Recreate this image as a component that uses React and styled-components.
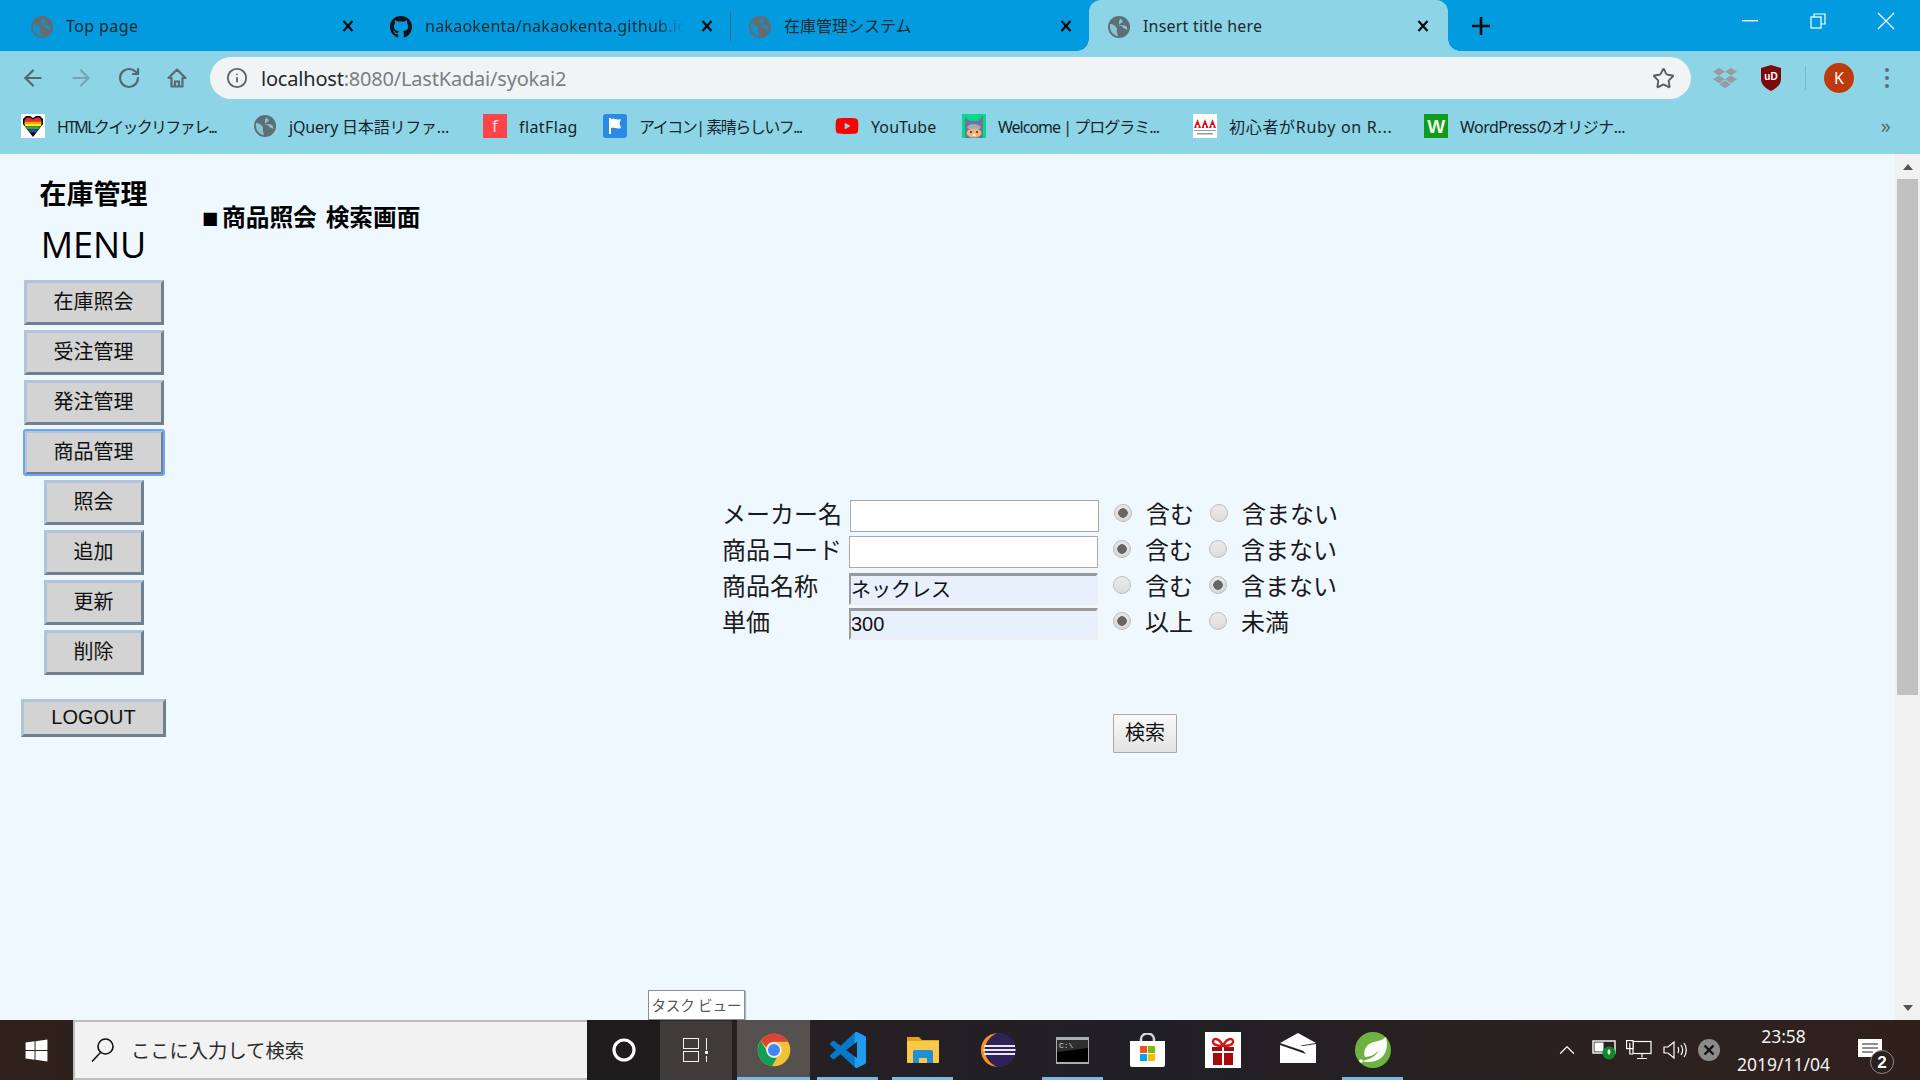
import React from "react";
import styled, { createGlobalStyle } from "styled-components";
import { ArrowLeft, ArrowRight, RotateCw, Info, Star, ChevronUp } from "lucide-react";
import { FaGithub, FaYoutube, FaWindows, FaDropbox } from "react-icons/fa";

const UI = `"Noto Sans", "Noto Sans CJK JP", sans-serif`;
const JP = `"Noto Sans CJK JP", "Noto Sans", sans-serif`;
const SAFE = `"Liberation Sans", "Noto Sans CJK JP", sans-serif`;

const Global = createGlobalStyle`
  html, body { margin: 0; padding: 0; overflow: hidden; background: #f0f8ff; }
  * { box-sizing: border-box; }
`;

const Screen = styled.div`
  width: 1920px; height: 1080px; display: flex; flex-direction: column; font-family: ${UI}; color: #111;
`;
const TabStrip = styled.div`
  height: 51px; display: flex; background: #039bdf; padding-left: 12px; flex: none;
`;
const Tab = styled.div`
  position: relative; width: 359px; height: 51px; display: flex; align-items: center; gap: 13px;
  padding: 3px ${p => (p.$active ? 15 : 13)}px 0 19px; font-size: 16px; color: #1d2a30;
  border-radius: ${p => (p.$active ? "12px 12px 0 0" : "0")};
  background: ${p => (p.$active ? "#8dd5e6" : "transparent")};
  ${p => p.$sep && `&::after { content: ""; position: absolute; right: -1px; top: 11px; height: 30px; width: 1px; background: #2a6f93; }`}
  ${p => p.$active && `
    &::before, &::after { content: ""; position: absolute; bottom: 0; width: 12px; height: 12px; }
    &::before { left: -12px; background: radial-gradient(circle at 0 0, #039bdf 11.5px, #8dd5e6 12px); }
    &::after { right: -12px; background: radial-gradient(circle at 100% 0, #039bdf 11.5px, #8dd5e6 12px); }
  `}
`;
const TabIcon = styled.span`
  width: 22px; height: 22px; flex: none; display: flex; align-items: center; justify-content: center;
  margin-top: -1px;
`;
const TabTitle = styled.span`
  flex: 1; min-width: 0; white-space: nowrap; overflow: hidden; line-height: 24px; font-family: ${UI};
  margin-top: -2px; letter-spacing: ${p => p.$ls || 0}px;
  ${p => p.$fade && `-webkit-mask-image: linear-gradient(90deg, #000 90%, transparent 100%);`}
`;
const TabClose = styled.span`
  width: 20px; height: 20px; flex: none; display: flex; align-items: center; justify-content: center;
  margin-top: -3px;
`;
const NewTab = styled.div`
  width: 66px; height: 51px; display: flex; align-items: center; justify-content: center;
`;
const WindowControls = styled.div`
  margin-left: auto; display: flex; height: 42px;
`;
const WindowButton = styled.div`
  width: 68px; height: 42px; display: flex; align-items: center; justify-content: center;
`;
const Toolbar = styled.div`
  height: 54px; flex: none; display: flex; align-items: center; padding-left: 9px; background: #8dd5e6;
`;
const NavButton = styled.div`
  width: 48px; height: 42px; display: flex; align-items: center; justify-content: center;
`;
const Omnibox = styled.div`
  width: 1481px; height: 42px; margin-left: 9px; border-radius: 21px; background: #f1f3f4;
  display: flex; align-items: center; padding: 0 16px 0 16px; gap: 13px; font-size: 20px;
`;
const Url = styled.div`
  flex: 1; color: #7b7f83; line-height: 28px; letter-spacing: -0.2px; padding-top: 1px;
  b { font-weight: 400; color: #26292b; }
`;
const ExtCell = styled.div`
  width: 46px; height: 42px; display: flex; align-items: center; justify-content: center;
  margin-left: ${p => p.$ml || 0}px;
`;
const ToolSep = styled.div`
  width: 1px; height: 24px; margin-left: 11px; background: #79bccc;
`;
const Avatar = styled.div`
  width: 30px; height: 30px; border-radius: 50%; background: #bf3a0b; color: #fff; font-size: 16px;
  display: flex; align-items: center; justify-content: center;
`;
const Kebab = styled.div`
  width: 4px; height: 20px; display: flex; flex-direction: column; justify-content: space-between;
  i { display: block; width: 4px; height: 4px; border-radius: 50%; background: #5f6a6e; }
`;
const BookmarkBar = styled.div`
  height: 49px; flex: none; display: flex; align-items: flex-start; padding: 9px 0 0 21px; background: #8dd5e6;
`;
const Bookmark = styled.div`
  display: flex; gap: 12px; font-size: 16px; line-height: 26px; color: #17242a; white-space: nowrap; flex: none;
  width: ${p => p.$w}px; letter-spacing: ${p => p.$ls || 0}px;
`;
const Favicon = styled.span`
  width: 24px; height: 24px; flex: none; display: flex; align-items: center; justify-content: center;
`;
const MoreBookmarks = styled.div`
  margin-left: auto; margin-right: 29px; font-size: 20px; line-height: 24px; color: #5f6a6e;
`;
const Viewport = styled.div`
  height: 866px; flex: none; display: flex; background: #f0f8ff;
`;
const Sidebar = styled.aside`
  width: 187px; flex: none; display: flex; flex-direction: column; align-items: center; padding-top: 20px;
`;
const BrandTitle = styled.div`
  font-family: ${JP}; font-weight: 700; font-size: 27px; line-height: 38px; color: #000;
`;
const MenuTitle = styled.div`
  font-size: 36px; line-height: 50px; margin: 8px 0 10px; color: #000; font-family: "Open Sans", sans-serif;
`;
const MenuList = styled.div`
  display: flex; flex-direction: column; align-items: center; gap: 5px;
`;
const MenuButton = styled.button`
  width: ${p => (p.$sub ? 100 : 140)}px; height: 45px; padding: 0 0 5px; background: #d3d3d3;
  border-width: 3px; border-style: solid; border-color: #b0c4de #708090 #708090 #b0c4de;
  font: 20px ${JP}; color: #111; border-radius: 0;
  ${p => p.$focus && `outline: 2px solid #6ea5f8; outline-offset: -1px; border-radius: 2px;`}
`;
const LogoutButton = styled(MenuButton)`
  width: 145px; height: 38px; margin-top: 19px; font: 20px ${SAFE}; padding: 0 0 2px;
`;
const Main = styled.main`
  flex: 1; padding: 46px 0 0 15px;
`;
const Heading = styled.div`
  height: 32px; overflow: visible; font-family: ${JP}; font-weight: 700; font-size: 23.7px; line-height: 32px; color: #000;
  white-space: pre; word-spacing: 3.5px;
`;
const HeadingMark = styled.span`
  display: inline-block; width: 20px; font-size: 16.5px; line-height: 20px;
`;
const Form = styled.form`
  margin: 268px 0 0 521px;
`;
const FormRow = styled.div`
  display: flex; height: 36px; align-items: flex-start;
`;
const FieldLabel = styled.label`
  width: 127px; margin-left: -1px; flex: none; font: 24px/26px ${JP}; color: #1a1a1a; white-space: nowrap;
`;
const Fields = styled.div`
  display: flex; align-items: flex-start; margin-left: ${p => p.$shift || 0}px;
`;
const TextField = styled.input`
  width: 249px; height: 32px; margin: ${p => p.$drop || 0}px 0 0; padding: 0 ${p => (p.$filled ? 0 : 1)}px ${p => (p.$drop ? 3 : 0)}px; outline: none;
  font: 20px ${SAFE}; color: #111;
  ${p => p.$filled
    ? `background: #e8f0fe; border-width: 3px 2px 2px; border-style: solid; border-color: #9a9a9a #efefef #efefef #9a9a9a;`
    : `background: #fff; border: 1px solid #a9a9a9;`}
`;
const Radio = styled.input`
  appearance: none; -webkit-appearance: none; width: 18px; height: 18px; margin: 4px 0 0 15px; flex: none;
  border-radius: 50%; border: 1px solid #bcbcbc;
  background: ${p => p.checked
    ? "radial-gradient(circle, #666 0 4.5px, transparent 5px), linear-gradient(#e8e8e8, #d8d8d8)"
    : "linear-gradient(#ebebeb, #dcdcdc)"};
`;
const RadioText = styled.span`
  margin-left: 14px; font: 24px/26px ${JP}; color: #1a1a1a; white-space: nowrap; width: ${p => p.$w}px;
`;
const SearchButton = styled.button`
  display: block; width: 64px; height: 39px; margin: 70px 0 0 390px; padding: 0 0 4px;
  background: linear-gradient(#fafafa, #e2e2e2); border: 1px solid #a8a8a8; border-radius: 1px;
  font: 20px ${JP}; color: #111;
`;
const Scrollbar = styled.div`
  width: 25px; flex: none; background: #f1f1f1; display: flex; flex-direction: column; align-items: center;
`;
const ScrollArrow = styled.div`
  height: 25px; flex: none; display: flex; align-items: center; justify-content: center;
`;
const ScrollThumb = styled.div`
  width: 21px; height: 516px; background: #c1c1c1; flex: none;
`;
const ScrollTrack = styled.div`
  flex: 1;
`;
const Taskbar = styled.div`
  height: 60px; flex: none; display: flex; align-items: stretch; color: #fff;
  background: linear-gradient(90deg, #2f211b 0%, #262021 35%, #211f26 60%, #2c221f 85%, #30201c 100%);
`;
const StartCell = styled.div`
  width: 73px; display: flex; align-items: center; justify-content: center;
`;
const SearchBox = styled.div`
  width: 514px; background: #f2f2f2; border: 2px solid #bdbdbd; border-right: none; display: flex; align-items: center;
  padding-left: 16px; gap: 17px; color: #2b2b2b; font: 19.3px ${JP};
`;
const CortanaCell = styled.div`
  width: 73px; background: #1f1c1e; display: flex; align-items: center; justify-content: center;
`;
const TaskViewCell = styled.div`
  position: relative; width: 72px; background: #3f3b3b; display: flex; align-items: center; justify-content: center;
`;
const Tooltip = styled.div`
  position: absolute; left: -12px; top: -30px; width: 97px; height: 30px; background: #fff; border: 1px solid #8e8e8e;
  color: #555; font: 14.5px/28px ${JP}; text-align: center; white-space: nowrap; box-shadow: 1px 1px 1px #0004;
`;
const AppSlots = styled.div`
  display: flex; margin-left: 3px;
`;
const AppSlot = styled.div`
  position: relative; width: 75px; display: flex; align-items: center; justify-content: center;
  background: ${p => (p.$hot ? "#55514f" : "transparent")};
  ${p => p.$hot && `margin-left: 2px; width: 73px;`}
  ${p => p.$running && `&::after { content: ""; position: absolute; bottom: 0; left: ${p.$hot ? 0 : 7}px; right: ${p.$hot ? 0 : 7}px; height: 3px; background: #76b9ed; }`}
`;
const Tray = styled.div`
  margin-left: auto; display: flex; padding-right: 6px;
`;
const TrayCell = styled.div`
  width: ${p => p.$w || 36}px; display: flex; align-items: center; justify-content: center;
  padding-left: ${p => p.$pl || 0}px;
`;
const Clock = styled.div`
  width: 117px; display: flex; flex-direction: column; align-items: center; justify-content: center;
  font: 17.5px/28px ${UI}; color: #f2f2f2;
`;

const Globe = ({ s = 22, c = "#5f6e74", b = "#8dd5e6" }) => (
  <svg width={s} height={s} viewBox="0 0 22 22">
    <circle cx="11" cy="11" r="11" fill={c} />
    <path d="M2 8c3 0 5 1.500 6.500 3.500 1 1.600 0 3 .5 5 .3 1.500 1 2.500 1 3.500-4-.4-7.500-4-8-8-.2-1.500 0-3 0-4z" fill={b} opacity=".85" />
    <path d="M12 2.500c1.500 1 3 1.500 2.500 3.500-.5 1.500-3 1-3.500 3 1.500.5 5-.5 7 1 1 .8 1.500 3 1 4.500-.3-1.500-2-2-3.500-2 0-2-2-2.500-4-2.500-1-2.500-.5-5 .5-7.500z" fill={b} opacity=".85" />
  </svg>
);
const CloseX = () => (
  <svg width="14" height="14" viewBox="0 0 14 14"><path d="M2.500 2l9 10M11.500 2l-9 10" stroke="#0a0a0a" strokeWidth="2.200" /></svg>
);
const HomeIcon = () => (
  <svg width="24" height="24" viewBox="0 0 24 24" fill="none" stroke="#5b6a70" strokeWidth="2.200"><path d="M12 3.500L3.500 12H6.500v8.500h11V12h3z" strokeLinejoin="round" /><path d="M10 20.500v-5h4v5" /></svg>
);
const UBlock = () => (
  <svg width="22" height="26" viewBox="0 0 22 26">
    <path d="M11 0l10 3v11c0 6-5 9.500-10 12C6 23.500 1 20 1 14V3z" fill="#7b0a0d" />
    <text x="11" y="15" textAnchor="middle" fontSize="10" fontWeight="700" fill="#fff" fontFamily="Liberation Sans">uD</text>
  </svg>
);
const Heart = () => (
  <svg width="24" height="24" viewBox="0 0 24 24">
    <rect width="24" height="24" fill="#fff" />
    <path d="M12 23L2 10V5l3-3h4l3 2 3-2h4l3 3v5z" fill="#000" />
    <path d="M3.500 6L6 3.500h3L12 5.500l3-2h3L20.500 6v1.500h-17z" fill="#ef2a2a" />
    <path d="M3.500 7.500h17V10h-17z" fill="#f7a51d" />
    <path d="M3.500 10h17l-.8 2.500H4.300z" fill="#f3ea20" />
    <path d="M4.600 12.500h14.800l-2 3H6.600z" fill="#2fa936" />
    <path d="M6.900 15.500h10.200l-2.300 3H9.200z" fill="#2446c4" />
  </svg>
);
const FlatFlag = () => (
  <svg width="24" height="24" viewBox="0 0 24 24">
    <rect width="24" height="24" fill="#ff434a" />
    <text x="12" y="18" textAnchor="middle" fontSize="17" fill="#ffd8d8" fontFamily="Noto Sans">f</text>
  </svg>
);
const IconFlag = () => (
  <svg width="24" height="24" viewBox="0 0 24 24">
    <rect width="24" height="24" rx="3" fill="#2a8ae6" />
    <path d="M6 4h2v16H6z" fill="#fff" />
    <path d="M8 5c3-1 5 1.500 10 0l-1.500 4.500L18 14c-4 1.500-7-1-10 0z" fill="#fff" />
  </svg>
);
const Cat = () => (
  <svg width="24" height="24" viewBox="0 0 24 24">
    <rect width="24" height="24" fill="#00dc8a" />
    <path d="M3 24V9L3 3l5 4h8l5-6v23z" fill="#74729c" />
    <path d="M5 13c3-4 11-4 14 0l-1 2H6z" fill="#a9a8b8" />
    <ellipse cx="12" cy="19" rx="7.500" ry="4.500" fill="#eeb678" />
    <circle cx="9" cy="18" r="1" fill="#333" /><circle cx="15" cy="18" r="1" fill="#333" />
    <path d="M10.500 21h3" stroke="#fff" strokeWidth="1.500" />
  </svg>
);
const AAA = () => (
  <svg width="24" height="24" viewBox="0 0 24 24">
    <rect width="24" height="24" fill="#fff" />
    <path d="M1 14l3.500-9L8 14zM8.500 14L12 5l3.500 9zM16 14l3.500-9L23 14z" fill="#d6161e" />
    <path d="M3.500 11h2v3h-2zM11 11h2v3h-2zM18.500 11h2v3h-2z" fill="#fff" />
    <path d="M1 16h22v1H1zM4 19h16v1.500H4z" fill="#9a9a9a" />
  </svg>
);
const WordBadge = () => (
  <svg width="24" height="24" viewBox="0 0 24 24">
    <rect width="24" height="24" fill="#129a1c" />
    <text x="12" y="19" textAnchor="middle" fontSize="19" fontWeight="700" fill="#eaf8e4" fontFamily="Liberation Sans">W</text>
  </svg>
);
const Chrome = () => (
  <svg width="34" height="34" viewBox="0 0 48 48">
    <circle cx="24" cy="24" r="23" fill="#f1c232" />
    <path d="M24 1a23 23 0 0 1 19.900 11.500H24A11.500 11.500 0 0 0 13 20L5.200 10.800A23 23 0 0 1 24 1z" fill="#db4437" />
    <path d="M5.200 10.800L15 27.500A11 11 0 0 0 28 35L21 46.800A23 23 0 0 1 5.200 10.800z" fill="#0f9d58" />
    <circle cx="24" cy="24" r="11" fill="#eee" />
    <circle cx="24" cy="24" r="8.500" fill="#4285f4" />
  </svg>
);
const VS_PATH = "M23.150 2.587L18.210.21a1.494 1.494 0 0 0-1.705.29l-9.460 8.630-4.120-3.128a.999.999 0 0 0-1.276.057L.327 7.261A1 1 0 0 0 .326 8.740L3.899 12 .326 15.260a1 1 0 0 0 .001 1.479L1.650 17.940a.999.999 0 0 0 1.276.057l4.120-3.128 9.460 8.630a1.492 1.492 0 0 0 1.704.29l4.942-2.377A1.500 1.500 0 0 0 24 20.060V3.939a1.500 1.500 0 0 0-.85-1.352zm-5.146 14.861L10.826 12l7.178-5.448v10.896z";
const VSCode = () => (
  <svg width="36" height="36" viewBox="0 0 24 24">
    <defs><clipPath id="vsr"><rect x="16.500" y="0" width="8" height="24" /></clipPath></defs>
    <path fill="#0a78c6" d={VS_PATH} />
    <path fill="#1f9cf0" clipPath="url(#vsr)" d={VS_PATH} />
  </svg>
);
const Folder = () => (
  <svg width="32" height="28" viewBox="0 0 32 28">
    <path d="M0 1h12l3 3h17v5H0z" fill="#e0a30c" />
    <path d="M0 5h32v21a1 1 0 0 1-1 1H1a1 1 0 0 1-1-1z" fill="#f8c94a" />
    <path d="M6 27V16a2 2 0 0 1 2-2h16a2 2 0 0 1 2 2v11h-6v-5h-8v5z" fill="#1f8fd6" />
  </svg>
);
const Eclipse = () => (
  <svg width="36" height="36" viewBox="0 0 36 36">
    <circle cx="19" cy="18" r="17" fill="#2d2357" />
    <path d="M17 1C7 2 1 9 1 18s6 16 16 17C9 31 5 25 5 18S9 5 17 1z" fill="#f7941e" />
    <path d="M4 13h31v2H4zM3.500 17h32v2h-32zM4 21h31v2H4z" fill="#e8e6f2" />
  </svg>
);
const Terminal = () => (
  <svg width="33" height="27" viewBox="0 0 33 27">
    <rect width="33" height="27" fill="#a9aeb4" />
    <rect x="1" y="3" width="31" height="22" fill="#000" />
    <path d="M1 3h31v8L1 15z" fill="#3a3a3a" opacity=".8" />
    <text x="3" y="11" fontSize="8" fill="#ddd" fontFamily="Liberation Mono">C:\</text>
  </svg>
);
const Store = () => (
  <svg width="35" height="34" viewBox="0 0 35 34">
    <path d="M11 9V6a6.500 5.500 0 0 1 13 0v3" fill="none" stroke="#d8d8d8" strokeWidth="2.500" />
    <path d="M0 8h35v24a2 2 0 0 1-2 2H2a2 2 0 0 1-2-2z" fill="#fff" />
    <rect x="10" y="13" width="7" height="7" fill="#f25022" />
    <rect x="18" y="13" width="7" height="7" fill="#7fba00" />
    <rect x="10" y="21" width="7" height="7" fill="#00a4ef" />
    <rect x="18" y="21" width="7" height="7" fill="#ffb900" />
  </svg>
);
const Gift = () => (
  <svg width="36" height="36" viewBox="0 0 36 36">
    <rect width="36" height="36" fill="#fff" />
    <path d="M7 15h10v4H7zM19 15h10v4H19zM8 21h9v12H8zM19 21h9v12h-9z" fill="#a60a0a" />
    <path d="M18 14c-3-7-9-9-10-5-.6 3 3 5 10 5zm0 0c3-7 9-9 10-5 .6 3-3 5-10 5z" fill="none" stroke="#d01818" strokeWidth="2.400" />
  </svg>
);
const Mail = () => (
  <svg width="36" height="30" viewBox="0 0 36 30" style={{ marginTop: -4 }}>
    <path d="M18 0l18 10-15 2.500 4 6L0 10z" fill="#fff" />
    <path d="M0 12l26 9-6.500-7.500L36 11v19H0z" fill="#fff" />
  </svg>
);
const Spring = () => (
  <svg width="36" height="36" viewBox="0 0 36 36">
    <circle cx="18" cy="18" r="18" fill="#6db33f" />
    <path d="M31 5c2 8 1 16-5 21-5 4-13 5-19 3 6-1 14-4 17-11-4 5-10 7-14 7-2-5 0-11 6-14 5-2 11-2 15-6z" fill="#fff" />
    <circle cx="6" cy="29" r="1.800" fill="#fff" />
  </svg>
);
const Magnifier = () => (
  <svg width="23" height="24" viewBox="0 0 23 24" fill="none" stroke="#111" strokeWidth="1.600">
    <circle cx="14.500" cy="8.500" r="7.500" /><path d="M9.500 14.500L1 23.500" />
  </svg>
);
const Cortana = () => (
  <svg width="26" height="26" viewBox="0 0 26 26"><circle cx="13" cy="13" r="10" fill="none" stroke="#fff" strokeWidth="3.200" /></svg>
);
const TaskViewIcon = () => (
  <svg width="26" height="24" viewBox="0 0 26 24" fill="none" stroke="#f2f2f2" strokeWidth="1">
    <rect x=".5" y=".5" width="15" height="10" /><rect x=".5" y="13.500" width="15" height="10" />
    <path d="M23.500 0v12M23.500 18v6" /><rect x="22" y="13" width="3" height="3" fill="#f2f2f2" stroke="none" />
  </svg>
);
const Battery = () => (
  <svg width="26" height="24" viewBox="0 0 26 24">
    <rect x="1" y="3" width="22" height="12" fill="none" stroke="#fff" strokeWidth="1.400" />
    <rect x="2.500" y="4.500" width="9" height="9" fill="#fff" />
    <circle cx="17" cy="15" r="6.500" fill="#0d8a29" />
    <path d="M17 11c2 1.500 2 4 0 6-2-2-2-4.500 0-6z" fill="#fff" />
  </svg>
);
const Network = () => (
  <svg width="26" height="20" viewBox="0 0 26 20" fill="none" stroke="#fff" strokeWidth="1.200">
    <rect x="7" y="1.500" width="18" height="12" /><path d="M16 14v3.500M11 18.500h10" />
    <rect x=".6" y=".6" width="6.500" height="8" fill="#2a201e" /><path d="M3.800 3v5M3.800 8.500V14H7" />
  </svg>
);
const Volume = () => (
  <svg width="24" height="20" viewBox="0 0 24 20" fill="none" stroke="#fff" strokeWidth="1.200">
    <path d="M1 7h4l6-5v16l-6-5H1z" /><path d="M15 7c1 2 1 4 0 6M18 5c2 3 2 7 0 10M21 3c3 4 3 10 0 14" />
  </svg>
);
const Muted = () => (
  <svg width="24" height="24" viewBox="0 0 24 24">
    <circle cx="12" cy="12" r="11" fill="#8b8b8b" />
    <path d="M7.500 7.500l9 9M16.500 7.500l-9 9" stroke="#111" strokeWidth="2.400" />
  </svg>
);
const Notification = () => (
  <svg width="40" height="50" viewBox="0 -13 40 50">
    <path d="M0 1h24v18h-6l-4 5v-5H0z" fill="#fff" />
    <path d="M4 6h16M4 10h16M4 14h11" stroke="#2a201e" strokeWidth="1" />
    <circle cx="24" cy="24" r="11.500" fill="#2a201e" stroke="#8a8a8a" strokeWidth="1" />
    <text x="24" y="30" textAnchor="middle" fontSize="17" fontWeight="700" fill="#fff" fontFamily="Liberation Sans">2</text>
  </svg>
);

const tabs = [
  { icon: <Globe b="#039bdf" />, title: "Top page", ls: 0.4 },
  { icon: <FaGithub size={24} color="#111" />, title: "nakaokenta/nakaokenta.github.io", sep: true, fade: true, ls: 0.25 },
  { icon: <Globe b="#039bdf" />, title: "在庫管理システム" },
  { icon: <Globe />, title: "Insert title here", active: true, ls: 0.2 },
];
const bookmarks = [
  { w: 232, ls: -1.7, icon: <Heart />, text: "HTMLクイックリファレ..." },
  { w: 230, ls: -0.2, icon: <Globe s={22} />, text: "jQuery 日本語リファ..." },
  { w: 120, ls: 0.4, icon: <FlatFlag />, text: "flatFlag" },
  { w: 232, ls: -1.5, icon: <IconFlag />, text: "アイコン| 素晴らしいフ..." },
  { w: 127, ls: 0.1, icon: <FaYoutube size={24} color="#f00" />, text: "YouTube" },
  { w: 231, ls: -1, icon: <Cat />, text: "Welcome | プログラミ..." },
  { w: 231, ls: 0.7, icon: <AAA />, text: "初心者がRuby on R..." },
  { w: 231, ls: -0.5, icon: <WordBadge />, text: "WordPressのオリジナ..." },
];
const menu = ["在庫照会", "受注管理", "発注管理"];
const subMenu = ["照会", "追加", "更新", "削除"];
const rows = [
  { label: "メーカー名", shift: 1, value: "", a: "含む", b: "含まない", first: true },
  { label: "商品コード", value: "", a: "含む", b: "含まない", first: true },
  { label: "商品名称", value: "ネックレス", a: "含む", b: "含まない", first: false, drop: 1 },
  { label: "単価", value: "300", a: "以上", b: "未満", first: true },
];
const apps = [
  { el: <Chrome />, hot: true, running: true },
  { el: <VSCode />, running: true },
  { el: <Folder />, running: true },
  { el: <Eclipse /> },
  { el: <Terminal />, running: true },
  { el: <Store /> },
  { el: <Gift /> },
  { el: <Mail /> },
  { el: <Spring />, running: true },
];

export default function App() {
  return (
    <Screen>
      <Global />
      <TabStrip>
        {tabs.map(t => (
          <Tab key={t.title} $active={t.active} $sep={t.sep}>
            <TabIcon>{t.icon}</TabIcon>
            <TabTitle $fade={t.fade} $ls={t.ls}>{t.title}</TabTitle>
            <TabClose><CloseX /></TabClose>
          </Tab>
        ))}
        <NewTab>
          <svg width="20" height="20" viewBox="0 0 20 20"><path d="M10 1v18M1 10h18" stroke="#0a0a0a" strokeWidth="2.600" /></svg>
        </NewTab>
        <WindowControls>
          <WindowButton><svg width="16" height="2"><rect width="16" height="1.400" fill="#fff" /></svg></WindowButton>
          <WindowButton>
            <svg width="16" height="16" viewBox="0 0 16 16" fill="none" stroke="#fff" strokeWidth="1.200"><rect x="1" y="4" width="10" height="11" /><path d="M4 4V1h11v10h-4" /></svg>
          </WindowButton>
          <WindowButton>
            <svg width="18" height="18" viewBox="0 0 18 18"><path d="M1 1l16 16M17 1L1 17" stroke="#fff" strokeWidth="1.200" /></svg>
          </WindowButton>
        </WindowControls>
      </TabStrip>

      <Toolbar>
        <NavButton><ArrowLeft size={26} color="#55666d" strokeWidth={2} /></NavButton>
        <NavButton><ArrowRight size={26} color="#75a4b2" strokeWidth={2} /></NavButton>
        <NavButton><RotateCw size={24} color="#55666d" strokeWidth={2.2} /></NavButton>
        <NavButton><HomeIcon /></NavButton>
        <Omnibox>
          <Info size={22} color="#5f6368" strokeWidth={2} />
          <Url><b>localhost</b>:8080/LastKadai/syokai2</Url>
          <Star size={23} color="#555e63" strokeWidth={2} />
        </Omnibox>
        <ExtCell $ml={11}><FaDropbox size={24} color="#969ca0" /></ExtCell>
        <ExtCell><UBlock /></ExtCell>
        <ToolSep />
        <ExtCell $ml={10}><Avatar>K</Avatar></ExtCell>
        <ExtCell $ml={2}><Kebab><i /><i /><i /></Kebab></ExtCell>
      </Toolbar>

      <BookmarkBar>
        {bookmarks.map(b => (
          <Bookmark key={b.text} $w={b.w} $ls={b.ls}>
            <Favicon>{b.icon}</Favicon>
            <span>{b.text}</span>
          </Bookmark>
        ))}
        <MoreBookmarks>»</MoreBookmarks>
      </BookmarkBar>

      <Viewport>
        <Sidebar>
          <BrandTitle>在庫管理</BrandTitle>
          <MenuTitle>MENU</MenuTitle>
          <MenuList>
            {menu.map(m => <MenuButton key={m} type="button">{m}</MenuButton>)}
            <MenuButton type="button" $focus>商品管理</MenuButton>
            {subMenu.map(m => <MenuButton key={m} type="button" $sub>{m}</MenuButton>)}
            <LogoutButton type="button">LOGOUT</LogoutButton>
          </MenuList>
        </Sidebar>
        <Main>
          <Heading><HeadingMark>■</HeadingMark>商品照会 検索画面</Heading>
          <Form>
            {rows.map((r, i) => (
              <FormRow key={r.label}>
                <FieldLabel>{r.label}</FieldLabel>
                <Fields $shift={r.shift}>
                  <TextField readOnly value={r.value} $filled={!!r.value} $drop={r.drop} />
                  <Radio type="radio" name={`r${i}`} readOnly checked={r.first} />
                  <RadioText $w={49}>{r.a}</RadioText>
                  <Radio type="radio" name={`r${i}`} readOnly checked={!r.first} />
                  <RadioText>{r.b}</RadioText>
                </Fields>
              </FormRow>
            ))}
            <SearchButton type="button">検索</SearchButton>
          </Form>
        </Main>
        <Scrollbar>
          <ScrollArrow><svg width="10" height="6"><path d="M5 0l5 6H0z" fill="#555" /></svg></ScrollArrow>
          <ScrollThumb />
          <ScrollTrack />
          <ScrollArrow><svg width="10" height="6"><path d="M0 0h10L5 6z" fill="#555" /></svg></ScrollArrow>
        </Scrollbar>
      </Viewport>

      <Taskbar>
        <StartCell><FaWindows size={25} color="#fff" /></StartCell>
        <SearchBox>
          <Magnifier />
          <span>ここに入力して検索</span>
        </SearchBox>
        <CortanaCell><Cortana /></CortanaCell>
        <TaskViewCell>
          <TaskViewIcon />
          <Tooltip>タスク ビュー</Tooltip>
        </TaskViewCell>
        <AppSlots>
          {apps.map((a, i) => <AppSlot key={i} $hot={a.hot} $running={a.running}>{a.el}</AppSlot>)}
        </AppSlots>
        <Tray>
          <TrayCell><ChevronUp size={26} color="#f2f2f2" strokeWidth={1.2} /></TrayCell>
          <TrayCell $pl={3}><Battery /></TrayCell>
          <TrayCell><Network /></TrayCell>
          <TrayCell><Volume /></TrayCell>
          <TrayCell $w={32}><Muted /></TrayCell>
          <Clock><span>23:58</span><span>2019/11/04</span></Clock>
          <TrayCell $w={72}><Notification /></TrayCell>
        </Tray>
      </Taskbar>
    </Screen>
  );
}
